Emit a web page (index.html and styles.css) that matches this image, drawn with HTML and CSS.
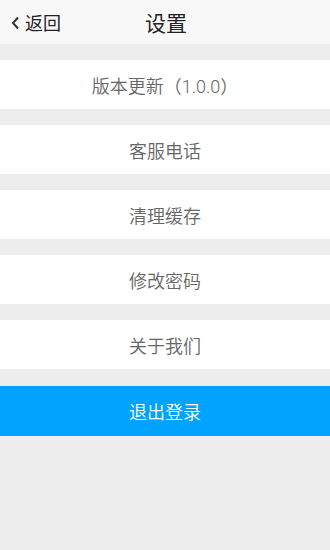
FILE: index.html
```html
<!DOCTYPE html>
<html lang="zh">
<head>
<meta charset="utf-8">
<link rel="stylesheet" href="styles.css">
</head>
<body>
<div class="page">
  <header class="topbar">
    <div class="back">
      <svg class="chev" width="9" height="14" viewBox="0 0 9 14"><path d="M7 1.5 L2 7 L7 12.5" fill="none" stroke="#333" stroke-width="2"/></svg>
      <span>返回</span>
    </div>
    <div class="title">设置</div>
  </header>
  <div class="list">
    <div class="item">版本更新（1.0.0）</div>
    <div class="item">客服电话</div>
    <div class="item">清理缓存</div>
    <div class="item">修改密码</div>
    <div class="item">关于我们</div>
    <div class="item logout">退出登录</div>
  </div>
</div>
</body>
</html>
```
FILE: styles.css
```css
html, body {
  margin: 0;
  padding: 0;
  background: #ededed;
  font-family: "Roboto", "Noto Sans CJK SC", sans-serif;
}
.page {
  width: 330px;
  min-height: 550px;
  background: #ededed;
}
.topbar {
  height: 44px;
  background: #f8f8f8;
  position: relative;
  display: flex;
  align-items: center;
  justify-content: center;
  font-weight: 400;
}
.back {
  position: absolute;
  left: 11px;
  top: 0;
  height: 44px;
  display: flex;
  align-items: center;
  gap: 5px;
  font-size: 18px;
  color: #222;
}
.chev { margin-top: 1px; }
.title {
  font-size: 21px;
  color: #222;
  margin-left: 2px;
}
.list {
  display: flex;
  flex-direction: column;
  gap: 16px;
  padding-top: 16px;
}
.item {
  height: 49px;
  background: #fff;
  display: flex;
  align-items: center;
  justify-content: center;
  font-size: 18px;
  font-weight: 350;
  color: #666;
}
.logout {
  height: 50px;
  background: #00a3ff;
  color: #fff;
  margin-top: 1px;
}
```
